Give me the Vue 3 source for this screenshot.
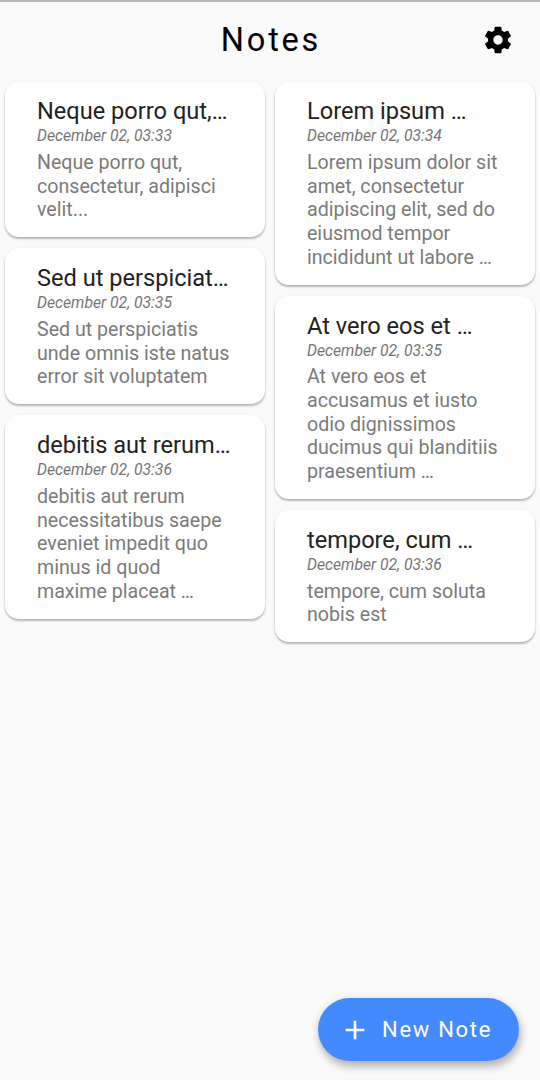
<script setup>
const columns = [
  [
    { title: 'Neque porro qut,…', date: 'December 02, 03:33', lines: ['Neque porro qut,', 'consectetur, adipisci', 'velit...'] },
    { title: 'Sed ut perspiciat…', date: 'December 02, 03:35', lines: ['Sed ut perspiciatis', 'unde omnis iste natus', 'error sit voluptatem'] },
    { title: 'debitis aut rerum…', date: 'December 02, 03:36', lines: ['debitis aut rerum', 'necessitatibus saepe', 'eveniet impedit quo', 'minus id quod', 'maxime placeat …'] },
  ],
  [
    { title: 'Lorem ipsum …', date: 'December 02, 03:34', lines: ['Lorem ipsum dolor sit', 'amet, consectetur', 'adipiscing elit, sed do', 'eiusmod tempor', 'incididunt ut labore …'] },
    { title: 'At vero eos et …', date: 'December 02, 03:35', lines: ['At vero eos et', 'accusamus et iusto', 'odio dignissimos', 'ducimus qui blanditiis', 'praesentium …'] },
    { title: 'tempore, cum …', date: 'December 02, 03:36', lines: ['tempore, cum soluta', 'nobis est'] },
  ],
]
</script>

<template>
  <div class="app">
    <header class="bar">
      <h1>Notes</h1>
      <svg class="gear" viewBox="0 0 24 24"><path d="M19.43 12.98c.04-.32.07-.64.07-.98s-.03-.66-.07-.98l2.11-1.65c.19-.15.24-.42.12-.64l-2-3.46c-.12-.22-.39-.3-.61-.22l-2.49 1c-.52-.4-1.08-.73-1.69-.98l-.38-2.65C14.46 2.18 14.25 2 14 2h-4c-.25 0-.46.18-.49.42l-.38 2.65c-.61.25-1.17.59-1.69.98l-2.49-1c-.23-.09-.49 0-.61.22l-2 3.46c-.13.22-.07.49.12.64l2.11 1.65c-.04.32-.07.65-.07.98s.03.66.07.98l-2.11 1.65c-.19.15-.24.42-.12.64l2 3.46c.12.22.39.3.61.22l2.49-1c.52.4 1.08.73 1.69.98l.38 2.65c.03.24.24.42.49.42h4c.25 0 .46-.18.49-.42l.38-2.65c.61-.25 1.17-.59 1.69-.98l2.49 1c.23.09.49 0 .61-.22l2-3.46c.12-.22.07-.49-.12-.64l-2.11-1.65zM12 15.5c-1.93 0-3.5-1.57-3.5-3.5s1.57-3.5 3.5-3.5 3.5 1.57 3.5 3.5-1.57 3.5-3.5 3.5z" /></svg>
    </header>
    <main class="grid">
      <div v-for="(col, i) in columns" :key="i" class="col">
        <article v-for="note in col" :key="note.title" class="card">
          <h2>{{ note.title }}</h2>
          <time>{{ note.date }}</time>
          <p><span v-for="line in note.lines" :key="line">{{ line }}</span></p>
        </article>
      </div>
    </main>
    <button class="fab">
      <svg viewBox="0 0 24 24"><path d="M19 13h-6v6h-2v-6H5v-2h6V5h2v6h6v2z" /></svg>
      <span>New Note</span>
    </button>
  </div>
</template>

<style>
body { margin: 0; }
</style>

<style scoped>
.app {
  box-sizing: border-box;
  position: relative;
  height: 1080px;
  overflow: hidden;
  background: #fafafa;
  border-top: 2px solid #b8b8b8;
  font-family: Roboto, "Liberation Sans", sans-serif;
}
.bar {
  height: 79.6px;
  display: grid;
  grid-template-columns: 1fr auto 1fr;
  align-items: center;
}
h1 {
  grid-column: 2;
  margin: 0 -2px 4px 0;
  font-size: 32.5px;
  line-height: 40px;
  font-weight: 400;
  letter-spacing: 2.8px;
  color: #000;
}
.gear {
  width: 32px;
  height: 32px;
  justify-self: end;
  margin: 0 26px 4.4px 0;
}
.grid {
  display: grid;
  grid-template-columns: 259.6px 259.6px;
  gap: 10.4px;
  padding: 0 5.2px;
}
.col { display: flex; flex-direction: column; gap: 11px; }
.card {
  box-sizing: border-box;
  padding: 15.7px 0 15.3px 31.8px;
  border-radius: 14px;
  background: #fff;
  box-shadow: 0 2px 2px rgba(0, 0, 0, .22), 0 1px 3px rgba(0, 0, 0, .1);
  white-space: nowrap;
}
h2 {
  margin: 0;
  font-size: 23.6px;
  line-height: 28px;
  font-weight: 400;
  color: #222;
}
time {
  display: block;
  font-size: 15.7px;
  line-height: 22px;
  font-style: italic;
  color: #757575;
}
p {
  margin: 3.8px 0 0;
  font-size: 19.63px;
  line-height: 23.7px;
  color: #7b7b7b;
}
p span { display: block; }
.fab {
  position: absolute;
  right: 21px;
  bottom: 19px;
  width: 201px;
  height: 63px;
  display: flex;
  align-items: center;
  padding: 0 0 0 21px;
  border: 0;
  border-radius: 32px;
  background: #448aff;
  color: #fff;
  font: 400 22px Roboto, sans-serif;
  letter-spacing: 1.7px;
  white-space: nowrap;
  box-shadow: 2px 6px 8px rgba(0, 0, 0, .24), 0 1px 10px rgba(0, 0, 0, .1);
}
.fab svg { width: 32px; height: 32px; fill: #fff; margin-right: 11px; }
</style>
